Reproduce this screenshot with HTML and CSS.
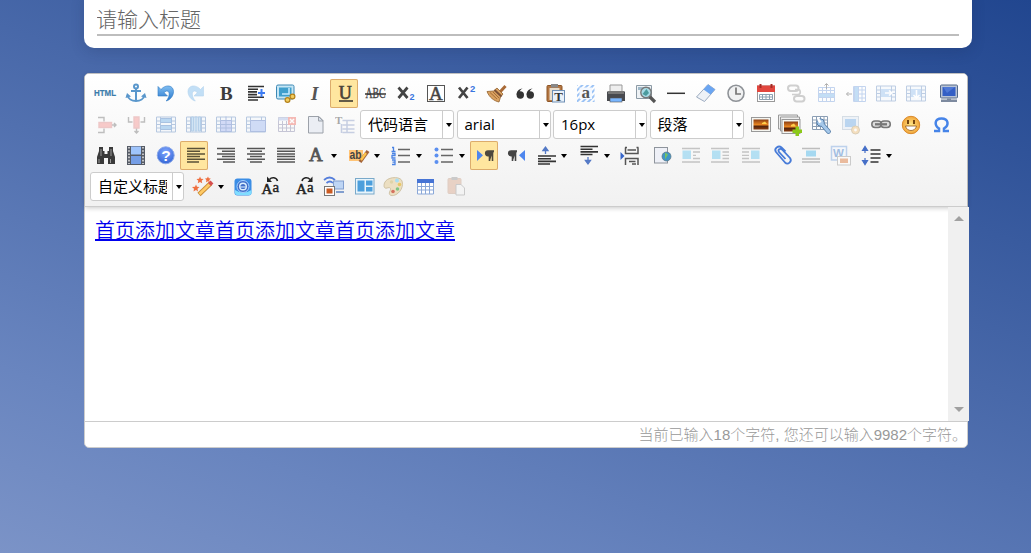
FILE: index.html
```html
<!DOCTYPE html>
<html lang="zh-CN">
<head>
<meta charset="utf-8">
<title>添加文章</title>
<link rel="stylesheet" href="styles.css">
</head>
<body>
<svg width="0" height="0" class="defs">
<defs>
<linearGradient id="gs" x1="0" y1="0" x2="0" y2="1"><stop offset="0" stop-color="#8a3d12"/><stop offset=".55" stop-color="#f08a22"/><stop offset=".65" stop-color="#50220c"/><stop offset="1" stop-color="#8a3d12"/></linearGradient>
<radialGradient id="gh" cx=".5" cy=".3" r=".7"><stop offset="0" stop-color="#7fa6ff"/><stop offset="1" stop-color="#3566d6"/></radialGradient>
<radialGradient id="gy"><stop offset="0" stop-color="#ffe98a"/><stop offset="1" stop-color="#f2a63a"/></radialGradient>
<linearGradient id="gu" x1="0" y1="0" x2="0" y2="1"><stop offset="0" stop-color="#7fbdf2"/><stop offset="1" stop-color="#2a78cc"/></linearGradient>
<pattern id="hatch" width="4" height="4" patternUnits="userSpaceOnUse" patternTransform="rotate(45)"><rect width="2" height="4" fill="#9cc3f5"/></pattern>
</defs>
<symbol id="grid" viewBox="0 0 28 28"><path d="M6.500 6.500h19v15h-19zM10.500 6.500v15M21.500 6.500v15M6.500 10.500h4M6.500 14h4M6.500 17.500h4M21.500 10.500h4M21.500 14h4M21.500 17.500h4" fill="#f3f7fc" stroke="#8ba8d0"/></symbol>
</svg>

<section class="title-card"><input class="title-input" type="text" placeholder="请输入标题"></section>

<section class="editor">
<div class="toolbar">
<div class="row">
<span class="btn"><svg><text x="4" y="17" font-size="9" font-weight="700" fill="#3c7cab" stroke="#3c7cab" stroke-width=".2" textLength="22" lengthAdjust="spacingAndGlyphs">HTML</text></svg></span>
<span class="btn"><svg fill="none" stroke="#5a97cc" stroke-width="2"><circle cx="16" cy="7.500" r="2"/><path d="M16 10v12M11 12h10M7.500 16c1 8 16 8 17 0"/><path d="M5.500 19l1.500-5 4 3.500zM26.500 19l-1.500-5-4 3.500z" fill="#5a97cc" stroke="none"/></svg></span>
<span class="btn"><svg><path d="M8 7.500V17h9.500l-3.300-3.300c1-1.200 2-1.700 3-1.700 3 .5 2.500 6-1 10 4-1 7.300-5 7.300-9.500C23.500 6 15.500 5 11 10.500z" fill="url(#gu)" stroke="#2e78c2" stroke-width=".6"/></svg></span>
<span class="btn dim"><svg><path d="M23.500 7.500V17H14l3.300-3.300c-1-1.200-2-1.700-3-1.700-3 .5-2.500 6 1 10-4-1-7.300-5-7.300-9.500C8 6 16 5 20.500 10.500z" fill="#7cbbee" stroke="#5fa5dd" stroke-width=".6"/></svg></span>
<span class="btn"><svg><text x="10" y="20.500" class="serif" font-size="19" font-weight="700" fill="#3c3c3c">B</text></svg></span>
<span class="btn"><svg stroke="#333" stroke-width="1.600"><path d="M8 7.500h16M8 10.200h10M8 12.900h9M8 15.600h9M8 18.300h16M8 21h10"/><path d="M18 13h2.500v-3h2v3H25v2h-2.500v3h-2v-3H18z" fill="#3d7cf2" stroke="none"/></svg></span>
<span class="btn"><svg><rect x="6.500" y="6" width="17.500" height="14" rx="1.500" fill="#c6e6f5" stroke="#3c88b5"/><rect x="9" y="8.500" width="12.500" height="9" fill="#3f9fcd"/><path d="M12 15h7V9" stroke="#c8ecff" fill="none" stroke-width="1.500"/><g stroke="#b5821b" stroke-width="1.200" fill="#f1cd60"><circle cx="17.500" cy="21" r="2.400"/><circle cx="22.500" cy="17.500" r="2.400"/></g></svg></span>
<span class="btn"><svg><text x="11" y="20.500" class="serif" font-size="19" font-weight="700" font-style="italic" fill="#555">I</text></svg></span>
<span class="btn on"><svg><text x="8.800" y="19.500" class="serif" font-size="18" font-weight="400" fill="#4a4438" stroke="#4a4438" stroke-width=".7">U</text><path d="M9 22h14" stroke="#4a4438" stroke-width="1.700"/></svg></span>
<span class="btn"><svg><text x="5.500" y="19" class="serif" font-size="14" fill="#444" stroke="#444" stroke-width=".3" textLength="20" lengthAdjust="spacingAndGlyphs">ABC</text><path d="M5 15h21" stroke="#333" stroke-width="1.500"/></svg></span>
<span class="btn"><svg><path d="M8.500 8.500l9 10.500M17.500 8.500l-9 10.500" stroke="#444" stroke-width="2.700"/><text x="19.500" y="20.500" font-size="9" font-weight="700" fill="#3975e0">2</text></svg></span>
<span class="btn"><svg><rect x="7.500" y="6.500" width="17" height="16" fill="#fff" stroke="#555"/><text x="9" y="20.500" class="serif" font-size="19" fill="#444" stroke="#444" stroke-width=".5">A</text></svg></span>
<span class="btn"><svg><path d="M9 8.500l8.500 10.500M17.500 8.500L9 19" stroke="#444" stroke-width="2.700"/><text x="20" y="12.500" font-size="9.500" font-weight="700" fill="#3975e0">2</text></svg></span>
<span class="btn"><svg><path d="M25.500 7l-5.500 6" stroke="#a96a37" stroke-width="3"/><path d="M7 12.500l6.500-.5 3.500-3 6 6-2.500 3-1.500 5c-5-1-10-5-12-10.500z" fill="#d9a160" stroke="#93622f" stroke-width=".8"/><path d="M14.500 11l7 6.500" stroke="#7c5136" stroke-width="2"/><path d="M10 13.500l7 6.500M13 13l6 6" stroke="#a56d38"/></svg></span>
<span class="btn"><svg fill="#333"><circle cx="10.300" cy="16" r="3.700"/><path d="M6.600 16c0-4 2-6 6-6.500-2 1-3 2-3 4z"/><circle cx="20.300" cy="16" r="3.700"/><path d="M16.600 16c0-4 2-6 6-6.500-2 1-3 2-3 4z"/></svg></span>
<span class="btn"><svg><rect x="7" y="6.500" width="15" height="16" rx="1" fill="#b47743" stroke="#8d5425"/><rect x="9.500" y="9" width="10" height="12" fill="#e8dccb"/><rect x="11" y="5" width="7" height="3.500" fill="#888"/><rect x="12.500" y="11.500" width="12" height="11.500" fill="#eaf1fa" stroke="#6e8fb5"/><text x="14.300" y="21.500" class="serif" font-size="13" font-weight="700" fill="#333">T</text></svg></span>
<span class="btn"><svg><rect x="7" y="6" width="17.500" height="17" fill="url(#hatch)"/><rect x="9.500" y="8.500" width="12.500" height="11.500" fill="#f3f8ff"/><text x="11.500" y="18.500" class="serif" font-size="17" font-weight="700" fill="#555">a</text></svg></span>
<span class="btn"><svg><path d="M10 6h12v7H10z" fill="#eee" stroke="#999"/><path d="M7 12.500h18V22H7z" fill="#484a4f"/><path d="M8 12h16v3H8z" fill="#777"/><rect x="10" y="19" width="12" height="4" fill="#79b6ff" stroke="#555" stroke-width=".6"/></svg></span>
<span class="btn"><svg><path d="M6.500 6.500h15v13h-15z" fill="#eef2f5" stroke="#8c9aa5"/><path d="M8 8h12v3H8z" fill="#9fb8c8"/><path d="M19.500 17.500l5.500 5.500" stroke="#555" stroke-width="3.200"/><circle cx="16" cy="13.500" r="5.200" fill="#a9dbe6" stroke="#777" stroke-width="1.400"/><path d="M12.500 15l4-5 2.500 4-3 3z" fill="#4b9b9e"/></svg></span>
<span class="btn"><svg><path d="M7 14.300h18" stroke="#333" stroke-width="1.500"/></svg></span>
<span class="btn"><svg><path d="M6.500 18L18 5.500l7 5L14.500 22.500z" fill="#eef2f7" stroke="#9cabc0"/><path d="M13.500 10.500l4.500-5 7 5-4.500 5z" fill="#6aa5f2"/></svg></span>
<span class="btn"><svg><circle cx="16" cy="14.300" r="8" fill="#f0f1f2" stroke="#8e9297" stroke-width="1.600"/><path d="M16 8.500V15h5" fill="none" stroke="#777" stroke-width="1.700"/></svg></span>
<span class="btn"><svg><rect x="7.500" y="7" width="17" height="15.500" fill="#fff" stroke="#999"/><path d="M7 6.500h18v6.500H7z" fill="#e2463e"/><path d="M10.500 5v4M21.500 5v4" stroke="#a32c26" stroke-width="2"/><path d="M9.500 15.500h13v5h-13zM12.500 15.500v5M16 15.500v5M19.500 15.500v5M9.500 18h13" fill="none" stroke="#8da1b2"/></svg></span>
<span class="btn dim"><svg fill="none" stroke="#999" stroke-width="2"><rect x="8" y="6.500" width="10.500" height="5.500" rx="2.700"/><rect x="14" y="17" width="10.500" height="5.500" rx="2.700"/><path d="M12 15.500h6c3 0 3-5 0-5h-3" stroke-width="1.700"/></svg></span>
<span class="btn dim"><svg fill="none" stroke="#7fa4df"><path d="M8.500 8.500h16v14h-16zM12.500 8.500v14M16.500 8.500v14M20.500 8.500v14M8.500 11.500h16" fill="#fff"/><path d="M8.500 14.500h16v4h-16z" fill="#7db9ed"/><path d="M16.500 10V5M14.500 6.500l2-2 2 2" stroke="#555"/></svg></span>
<span class="btn dim"><svg fill="none" stroke="#7fa4df"><path d="M13.500 7.500h12v15h-12zM22 7.500v15M13.500 11h12M13.500 15h12M13.500 19h12" fill="#fff"/><path d="M14.500 7.500h4v15h-4z" fill="#7db9ed"/><path d="M12 15H6.500M8.500 13l-2 2 2 2" stroke="#555"/></svg></span>
<span class="btn pale"><svg><use href="#grid"/><path d="M11 10h10v8H11z" fill="#a9cbf2"/><path d="M15 14h7M19 11.500l3 2.500-3 2.500" stroke="#fff" stroke-width="1.600" fill="none"/></svg></span>
<span class="btn pale"><svg><use href="#grid"/><path d="M11 10h10v8H11z" fill="#a9cbf2"/><path d="M16.500 11v8M13.500 16l3 3 3-3" stroke="#fff" stroke-width="1.600" fill="none"/></svg></span>
<span class="btn"><svg><rect x="10.500" y="6" width="17" height="13" rx="1" fill="#b9c4d5" stroke="#566a89"/><rect x="12.500" y="8" width="13" height="9" fill="#345fc5"/><path d="M13 8h12l-8 6z" fill="#5079d6"/><path d="M17 19.500h4v1h6V23H11v-2.500h6z" fill="#7d8a9f"/></svg></span>
</div>

<div class="row">
<span class="btn dim"><svg fill="none" stroke="#777" stroke-width="1.400"><path d="M8 7.500h6v4M8 22.500h6v-4M22 15h4M24 13l2 2-2 2"/><rect x="9" y="12.500" width="12.500" height="5" fill="#f5918e" stroke="#e08b8b"/></svg></span>
<span class="btn dim"><svg fill="none" stroke="#777" stroke-width="1.400"><path d="M8.500 7v5h4M24.500 7v5h-4M16.500 18v5M14.500 21l2 2 2-2"/><path d="M14 7h5v11h-5z" fill="#f5918e" stroke="#e08b8b"/></svg></span>
<span class="btn mid"><svg><use href="#grid"/><path d="M10.500 8.500h11v4h-11zM10.500 15.500h11v4h-11z" fill="#91c1ec" stroke="#759ed2"/></svg></span>
<span class="btn mid"><svg><use href="#grid"/><path d="M11.500 7h2v14h-2zM15 7h2v14h-2zM18.500 7h2v14h-2z" fill="#b5d6f2" stroke="#88b4df"/></svg></span>
<span class="btn mid"><svg><use href="#grid"/><path d="M10.500 10.500h11v11h-11zM16 6.500v15M10.500 14.500h11M10.500 18h11" fill="#b8c6f5" stroke="#7f99d2"/></svg></span>
<span class="btn mid"><svg><use href="#grid"/><path d="M10.500 10.500h15v11h-15z" fill="#b4c8f4" stroke="#7f99d2"/></svg></span>
<span class="btn dim"><svg fill="none"><path d="M8.500 7.500h16v14h-16zM12.500 11v10M16.500 11v10M20.500 11v10M8.500 14.500h16M8.500 18h16" stroke="#88a"/><path d="M8.500 7.500h10v3h-10z" fill="#a8bce8"/><path d="M18 7h8v8h-8z" fill="#ee6c62"/><path d="M20 9l4 4M24 9l-4 4" stroke="#fff" stroke-width="1.500"/></svg></span>
<span class="btn"><svg opacity=".8"><path d="M8.500 6.500h10.500l4 4v12.500h-14.500z" fill="#e8ecf3" stroke="#858c96"/><path d="M18.500 6.500v4.500h4.500z" fill="#d2dbe9" stroke="#858c96"/></svg></span>
<span class="btn dim"><svg><text x="5" y="14" class="serif" font-size="11" font-weight="700" fill="#444">T</text><path d="M12.500 10.500h12M12.500 15h12M12.500 19h12M12.500 22.500h12M11.500 14v9M17 10v13" stroke="#8a9cc7" stroke-width="1.500"/></svg></span>
<span class="combo"><span class="combo-label">代码语言</span><i class="caret"></i></span>
<span class="combo"><span class="combo-label">arial</span><i class="caret"></i></span>
<span class="combo"><span class="combo-label">16px</span><i class="caret"></i></span>
<span class="combo"><span class="combo-label">段落</span><i class="caret"></i></span>
<span class="btn"><svg><rect x="5.500" y="7.500" width="19" height="14" fill="#f5f5f0" stroke="#999"/><rect x="7.500" y="9.500" width="15" height="10" fill="url(#gs)"/><path d="M16 13l3-1.500 2 2.500h-5z" fill="#ffd04b"/></svg></span>
<span class="btn"><svg><path d="M2.500 5h19v14h-19z" fill="#eee" stroke="#999"/><path d="M4.500 7h19v14h-19z" fill="#eee" stroke="#999"/><rect x="6" y="9.500" width="18" height="14" fill="#f5f5f0" stroke="#999"/><rect x="8" y="11.500" width="14" height="10" fill="url(#gs)"/><path d="M15 15l3-1.500 2 3h-5z" fill="#ffd04b"/><path d="M19.500 16.500h3.500v3h3v3.500h-3v3h-3.500v-3h-3v-3.500h3z" fill="#8cc919"/></svg></span>
<span class="btn"><svg fill="none"><path d="M6.500 6.500h15v13h-15zM10.500 6.500v13M14.500 6.500v13M18 6.500v13M6.500 10h15M6.500 13h15M6.500 16.500h15" fill="#fff" stroke="#8b9eb4"/><path d="M15.500 13.500l7 8" stroke="#557da8" stroke-width="4.800" stroke-linecap="round"/><circle cx="14.500" cy="12.500" r="3.700" fill="#a5c8ea" stroke="#557da8"/><path d="M15.500 13.500l7 8" stroke="#a5c8ea" stroke-width="3.200" stroke-linecap="round"/><path d="M12 9l2.500 3.500" stroke="#fff" stroke-width="2.500"/></svg></span>
<span class="btn dim"><svg><rect x="6.500" y="6.500" width="16" height="13" fill="#dfe9f5" stroke="#abc"/><rect x="9" y="9" width="11" height="8" fill="#6ea9e4"/><circle cx="19.500" cy="20" r="4" fill="#f2c078" stroke="#b59a6a"/><circle cx="19.500" cy="20" r="1.400" fill="#fff"/></svg></span>
<span class="btn"><svg fill="none" stroke="#777" stroke-width="1.500"><rect x="5.800" y="11" width="9.500" height="6.500" rx="3.200" fill="#ddd"/><rect x="14.800" y="11" width="9.500" height="6.500" rx="3.200" fill="#ddd"/><path d="M9 14.300h12" stroke-width="2.300"/></svg></span>
<span class="btn"><svg><circle cx="15" cy="15" r="8.700" fill="url(#gy)" stroke="#da8a2c"/><path d="M12 10v4M18 10v4" stroke="#754612" stroke-width="2"/><path d="M9.500 16h11c-1 6-10 6-11 0z" fill="#fff" stroke="#93591e" stroke-width=".8"/></svg></span>
<span class="btn"><svg fill="none" stroke="#4684e8" stroke-width="2.500"><path d="M8 21h5v-2.500c-5-3.500-4.500-10 2.500-10s8 6.500 2.500 10V21h5"/></svg></span>
</div>

<div class="row">
<span class="btn"><svg fill="#3a3a3a"><path d="M9 6h4v4h1.500v3h3v-3H19V6h4v4l2 6v7h-7v-6h-4v6H7v-7l2-6z"/><path d="M9 18v4M20.500 18v4M11 8v7M21 8v7" stroke="#999"/></svg></span>
<span class="btn"><svg><rect x="7" y="5" width="18" height="19" fill="#555b66"/><rect x="11" y="5.500" width="10" height="8" fill="#9fc4fb"/><rect x="11" y="15" width="10" height="8" fill="#759ee6"/><path d="M9 6v17M23 6v17" stroke="#ddd" stroke-width="1.600" stroke-dasharray="1.600 1.600"/></svg></span>
<span class="btn"><svg><circle cx="15.700" cy="14.300" r="8.500" fill="url(#gh)" stroke="#8aa8e8"/><text x="11.200" y="20" font-size="15.500" font-weight="700" fill="#fff">?</text></svg></span>
<span class="btn on"><svg stroke="#5b5137" stroke-width="1.500"><path d="M7 7.500h18M7 10.200h13M7 12.900h18M7 15.600h13M7 18.300h18M7 21h12"/></svg></span>
<span class="btn"><svg stroke="#555" stroke-width="1.500"><path d="M7 7.500h18M12 10.200h13M7 12.900h18M12 15.600h13M7 18.300h18M13 21h12"/></svg></span>
<span class="btn"><svg stroke="#555" stroke-width="1.500"><path d="M7 7.500h18M10 10.200h12M7 12.900h18M10 15.600h12M7 18.300h18M10 21h12"/></svg></span>
<span class="btn"><svg stroke="#555" stroke-width="1.500"><path d="M7 7.500h18M7 10.200h18M7 12.900h18M7 15.600h18M7 18.300h18M7 21h18"/></svg></span>
<span class="btn split"><svg><text x="9" y="19.500" class="serif" font-size="19" fill="#555" stroke="#555" stroke-width=".8">A</text></svg><i class="caret"></i></span>
<span class="btn split"><svg><path d="M6 9h14v11H6z" fill="#ffc476"/><text x="6.500" y="18" font-size="12" font-weight="700" fill="#444" textLength="12" lengthAdjust="spacingAndGlyphs">ab</text><path d="M17 21l8-11" stroke="#a4643a" stroke-width="3.500"/><path d="M18 19l5-7" stroke="#ffc64c" stroke-width="2.200"/></svg><i class="caret"></i></span>
<span class="btn split"><svg><path d="M13 8.500h12M13 14.500h12M13 21h12" stroke="#666" stroke-width="1.600"/><g fill="none" stroke="#4a83e4" stroke-width="1.300"><path d="M7 6.500h1.500v4M6.500 10.500h4M7 12.500h3v2H7v2.500h3.500M7 19h3v4.500H7M7.500 21.200H10"/></g></svg><i class="caret"></i></span>
<span class="btn split"><svg><path d="M13 8.500h12M13 14.500h12M13 21h12" stroke="#666" stroke-width="1.600"/><g fill="#5b8ff0"><circle cx="8.500" cy="8.500" r="2"/><circle cx="8.500" cy="14.500" r="2"/><circle cx="8.500" cy="21" r="2"/></g></svg><i class="caret"></i></span>
<span class="btn on"><svg><path d="M7 9l6 5.300L7 20z" fill="#4e86ee"/><path d="M24 10h-6a2.300 2.300 0 0 0 0 4.600h1.500V20M22.500 10v10" stroke="#4d483e" stroke-width="1.600" fill="#4d483e"/></svg></span>
<span class="btn"><svg><path d="M25 9l-6 5.300 6 5.700z" fill="#4e86ee"/><path d="M17 10h-6a2.300 2.300 0 0 0 0 4.600h1.500V20M15.500 10v10" stroke="#444" stroke-width="1.600" fill="#444"/></svg></span>
<span class="btn split"><svg><path d="M8 15h18M8 17.700h13M8 20.400h18M8 23h12" stroke="#333" stroke-width="1.600"/><path d="M15.500 13V7M13 9.500L15.500 6l2.500 3.500z" stroke="#5479c5" fill="#5b85d5" stroke-width="1.300"/></svg><i class="caret"></i></span>
<span class="btn split"><svg><path d="M7.500 5.500h17.500M7.500 8.200h12M7.500 10.900h17.500M7.500 13.500h12" stroke="#333" stroke-width="1.600"/><path d="M15 16v5M12.500 19.500L15 23l2.500-3.500z" stroke="#5479c5" fill="#5b85d5" stroke-width="1.300"/></svg><i class="caret"></i></span>
<span class="btn"><svg fill="none" stroke="#555" stroke-width="1.500"><path d="M10.500 6.500v6h12.500v-6M10.500 24v-6.500h12.500V24M12.500 9h8.500M14 20.500h6.500M17 23h4M10 6.500h2M21.500 6.500h2"/><path d="M5.500 11l4 4-4 4z" fill="#3665c9" stroke="none"/></svg></span>
<span class="btn"><svg><rect x="9.500" y="6.500" width="13" height="15.500" fill="#eef0f7" stroke="#8e949c"/><circle cx="21.500" cy="15.500" r="4.500" fill="#3f96c8" stroke="#5d7380" stroke-width=".7"/><path d="M20 11.500l3 2-3 5z" fill="#74c264"/></svg></span>
<span class="btn dim"><svg><path d="M7 7.500h18M18 11h7M18 14.300h3M18 17.500h7M7 21h18" stroke="#888" stroke-width="1.300"/><rect x="7.500" y="9.500" width="8.500" height="8.500" fill="#65c5ef"/></svg></span>
<span class="btn dim"><svg><path d="M6 7.500h18M17.500 11h6.500M17.500 14.300h6.500M17.500 17.500h6.500M6 21h18" stroke="#888" stroke-width="1.300"/><rect x="7" y="9.500" width="8.500" height="8.500" fill="#65c5ef"/></svg></span>
<span class="btn dim"><svg><path d="M7 7.500h18M7 11h7M7 14.300h7M7 17.500h7M7 21h18" stroke="#888" stroke-width="1.300"/><rect x="16" y="9.500" width="8.500" height="8.500" fill="#65c5ef"/></svg></span>
<span class="btn"><svg fill="none" stroke="#477bd8" stroke-width="1.800"><path d="M20.500 10.500l-4-4c-3-2.500-8 1-5.500 4.500l9 10.500c3 3 7.500-1 5-4.500l-8-8.500c-2-1.500-4.500 0-3 2.500l6.500 7"/></svg></span>
<span class="btn dim"><svg><path d="M7 7.500h18M7 18h18M7 21h18" stroke="#777" stroke-width="1.300"/><rect x="11" y="9.500" width="10" height="6" fill="#45b5ea"/></svg></span>
<span class="btn dim"><svg><rect x="6.500" y="5.500" width="15" height="13.500" fill="#f3f8ff" stroke="#79a5df" stroke-width="1.500"/><text x="8" y="15.500" font-size="11.500" font-weight="700" fill="#3a78c8">W</text><rect x="12.500" y="15.500" width="13" height="8.500" fill="#fff" stroke="#999"/><rect x="15" y="17.500" width="8" height="4.500" fill="#dc7434"/></svg></span>
<span class="btn split"><svg><path d="M15.500 9h10M15.500 13h10M15.500 17h10M15.500 21h8" stroke="#333" stroke-width="1.700"/><path d="M10 8v4M7.500 9.500L10 5.500l2.500 4zM10 17v4M7.500 19.500l2.500 4 2.500-4z" stroke="#456ec7" fill="#456ec7" stroke-width="1.200"/></svg><i class="caret"></i></span>
</div>

<div class="row">
<span class="combo"><span class="combo-label">自定义标题</span><i class="caret"></i></span>
<span class="btn split"><svg><path d="M12 22.500L23.500 11.500" stroke="#c88c36" stroke-width="4.500"/><path d="M12.500 22L23 12" stroke="#ffcb66" stroke-width="2.700"/><path d="M22.500 12.500l2.500-2.500" stroke="#d65050" stroke-width="4"/><path d="M9 12.500l1 2.300 2.500.3-2 1.700.5 2.700-2-1.500-2.500 1.500.5-2.700-2-1.700 3-.3zM13 4.500l1 2.300 2.500.3-1.800 1.700.5 2.500-2.200-1.300-2.200 1.300.5-2.500-1.800-1.700 2.500-.3zM21 4.500l.8 1.800 2 .2-1.500 1.400.4 2.300-1.700-1-2 1 .4-2.300L18 6.500l2-.2z" fill="#ef7040"/></svg><i class="caret"></i></span>
<span class="btn"><svg><rect x="5.500" y="6.500" width="17" height="17" rx="3" fill="#3b8de5"/><path d="M6 18q8 5 16.500 0v3q0 2-3 2H8q-2 0-2-2z" fill="#80ddff"/><circle cx="14" cy="14.500" r="6" fill="#416fc8" stroke="#a9d2ff"/><circle cx="14" cy="14.500" r="3.300" fill="none" stroke="#dcf0ff" stroke-width="1.400"/><path d="M11 15h6" stroke="#dcf0ff"/></svg></span>
<span class="btn"><svg fill="#222"><text x="2.500" y="22" class="serif" font-size="15" stroke="#222" stroke-width=".5">A</text><text x="13.500" y="19.500" class="serif" font-size="15" stroke="#222" stroke-width=".4">a</text><path d="M18.500 9c-1-4-6-4-8-1.500" fill="none" stroke="#222" stroke-width="1.500"/><path d="M8 4.500V10h5z"/></svg></span>
<span class="btn"><svg fill="#222"><text x="7" y="22" class="serif" font-size="15" stroke="#222" stroke-width=".5">A</text><text x="18" y="19.500" class="serif" font-size="15" stroke="#222" stroke-width=".4">a</text><path d="M13 9c1-4 6-4 8-1.500" fill="none" stroke="#222" stroke-width="1.500"/><path d="M23.500 4.500V10h-5z"/></svg></span>
<span class="btn"><svg fill="none"><path d="M5 8q5.500-5 11 0M7.500 11q3.500-3 6.500 0" stroke="#557edb" stroke-width="1.700"/><rect x="14.500" y="9" width="10" height="8" fill="#bed5f4" stroke="#829fcf"/><path d="M17 20h8" stroke="#829fcf" stroke-width="2"/><rect x="5.500" y="14.500" width="10" height="9" fill="#fff" stroke="#777"/><rect x="7.500" y="16.500" width="6" height="5" fill="#cb5b22"/></svg></span>
<span class="btn"><svg><rect x="6.500" y="6.500" width="18.500" height="15.500" fill="#e8f4fb" stroke="#79a9ca"/><path d="M8.500 8.500h7v11h-7zM17 8.500h6.500v5H17zM17 15h6.500v4.500H17z" fill="#4b9edc"/></svg></span>
<span class="btn"><svg opacity=".75"><path d="M5.500 11c2-6 14-7 17-3 3 5-1 14-8 15.500-4 .5-5-1.500-3.500-4.500s0-4-3-3-3.500-2-2.500-5z" fill="#ead9b2" stroke="#c5b48c"/><circle cx="12.500" cy="10" r="1.700" fill="#d8c98f"/><circle cx="18" cy="8.500" r="2" fill="#8ed7f4"/><circle cx="20.500" cy="12.500" r="1.800" fill="#e5b937"/><circle cx="18.500" cy="17" r="1.800" fill="#5bb661"/><circle cx="14" cy="19.500" r="1.800" fill="#cc4830"/></svg></span>
<span class="btn"><svg><path d="M8.500 7.500h16v14.500h-16zM12.500 10v12M16.500 10v12M20.500 10v12M8.500 14.500h16M8.500 18h16" fill="#fff" stroke="#8ba8d8"/><path d="M8 7h17v4H8z" fill="#4674d5"/></svg></span>
<span class="btn dim"><svg><rect x="9" y="6.500" width="13" height="15" rx="1" fill="#dba98e" stroke="#c6a18b"/><rect x="12.500" y="5" width="6" height="3" fill="#999"/><path d="M17 12.500h5l3.500 3.500v7h-8.500z" fill="#f6f6f6" stroke="#999"/></svg></span>
</div>
</div>

<div class="content">
<div class="document"><a class="doc-link" href="#">首页添加文章首页添加文章首页添加文章</a></div>
<div class="scrollbar"><i class="up"></i><i class="down"></i></div>
</div>
<div class="status">当前已输入18个字符, 您还可以输入9982个字符。</div>
</section>
</body>
</html>
```

FILE: styles.css
```css
* { box-sizing: border-box; }
html { height: 100%; }
body {
  margin: 0;
  height: 100%;
  overflow: hidden;
  padding: 0 59px 0 84px;
  display: flex;
  flex-direction: column;
  background: linear-gradient(20deg, #7b93c7 0%, #6985bf 20%, #21468f 100%);
  font-family: "Open Sans", "Noto Sans CJK SC", sans-serif;
}
.defs { flex: none; display: block; }
.title-card {
  flex: none;
  height: 58px;
  margin-top: -10px;
  padding: 10px 13px 12px;
  border-radius: 10px;
  background: #fff;
  box-shadow: 0 4px 14px rgba(20, 40, 80, .18);
}
.title-input {
  display: block;
  width: 100%;
  height: 36px;
  padding: 5px 0 0;
  border: 0;
  border-bottom: 2px solid #bdbdbd;
  outline: 0;
  background: transparent;
  font: 300 21px/28px "Liberation Sans", "Noto Sans CJK SC", sans-serif;
  text-indent: -1px;
}
.title-input::placeholder { color: #666; }
.editor {
  flex: none;
  width: 884px;
  height: 375px;
  margin-top: 25px;
  display: flex;
  flex-direction: column;
  border: 1px solid #ccc;
  border-radius: 5px;
  background: #fff;
}
.toolbar {
  flex: none;
  height: 133px;
  padding: 5px 0 0 5px;
  display: flex;
  flex-direction: column;
  gap: 2px;
  border-bottom: 1px solid #ccc;
  border-radius: 4px 4px 0 0;
  background: linear-gradient(#fff, #f1f1f1);
  box-shadow: 0 1px 5px rgba(0, 0, 0, .22);
}
.row { display: flex; height: 29px; }
.btn {
  flex: none;
  width: 28px;
  height: 29px;
  margin-right: 2px;
  display: flex;
  align-items: center;
}
.btn svg {
  flex: none;
  width: 28px;
  height: 29px;
  overflow: visible;
  font-family: "Liberation Sans", Arial, sans-serif;
}
.btn .serif { font-family: "Liberation Serif", serif; }
.split { width: 40.5px; }
.on {
  background: #ffe69f;
  box-shadow: inset 0 0 0 1px #dcac6c;
  border-radius: 2px;
}
.dim { opacity: .45; }
.mid { opacity: .6; }
.pale { opacity: .55; }
.combo {
  flex: none;
  width: 94px;
  height: 29px;
  margin-right: 2.5px;
  display: flex;
  align-items: center;
  border: 1px solid #ccc;
  border-radius: 3px;
  background: #fff;
}
.row .combo:last-of-type { margin-right: 2px; }
.combo-label {
  flex: none;
  width: 76px;
  height: 27px;
  padding-left: 7px;
  overflow: hidden;
  white-space: nowrap;
  font-size: 15px;
  line-height: 27px;
  color: #000;
}
.caret {
  flex: none;
  border: 3.5px solid transparent;
  border-top: 4px solid #000;
  border-bottom: 0;
}
.split .caret { margin: 1px 0 0 3px; }
.combo .caret {
  width: 11px;
  height: 27px;
  margin-left: 5px;
  padding-left: 2px;
  border: 0;
  border-left: 1px solid #ccc;
  display: flex;
  align-items: center;
  justify-content: center;
}
.combo .caret::before {
  content: "";
  border: 3.5px solid transparent;
  border-top: 4px solid #000;
  border-bottom: 0;
}
.content { flex: none; display: flex; height: 214px; width: 884px; }
.document { flex: 1; padding: 10px; font-size: 20px; line-height: 28px; }
.doc-link {
  color: #00e;
  font-family: "Liberation Sans", "Noto Sans CJK SC", sans-serif;
  font-weight: 350;
  text-decoration: underline;
  text-decoration-thickness: 2px;
}
.scrollbar {
  width: 21px;
  padding: 9px 0;
  display: flex;
  flex-direction: column;
  align-items: center;
  justify-content: space-between;
  background: #f0f0f0;
}
.up, .down { border: 5px solid transparent; }
.up { border-top: 0; border-bottom: 5px solid #a0a0a0; }
.down { border-bottom: 0; border-top: 5px solid #a0a0a0; }
.status {
  flex: 1;
  border-top: 1px solid #ccc;
  color: #999;
  font: 300 15px/25px "Liberation Sans", "Noto Sans CJK SC", sans-serif;
  text-align: right;
}
```
